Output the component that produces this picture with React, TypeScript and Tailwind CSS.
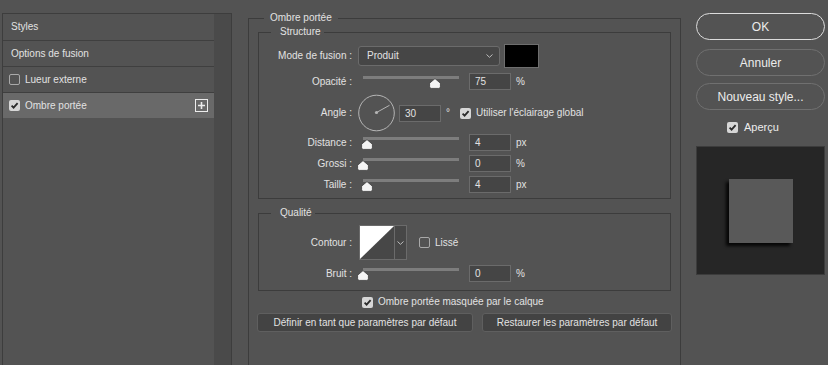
import React from "react";

function Check({ checked, className = "" }: { checked?: boolean; className?: string }) {
  return checked ? (
    <span className={`w-[11px] h-[11px] rounded-[2px] bg-[#d6d6d6] flex items-center justify-center shrink-0 ${className}`}>
      <svg width="9" height="9" viewBox="0 0 9 9">
        <path d="M1.6 4.6 L3.6 6.6 L7.6 2.2" stroke="#2a2a2a" strokeWidth="1.8" fill="none" />
      </svg>
    </span>
  ) : (
    <span className={`w-[11px] h-[11px] rounded-[2px] border border-[#a9a9a9] shrink-0 ${className}`} />
  );
}

function Thumb({ left }: { left: number }) {
  return (
    <svg
      width="12"
      height="11"
      viewBox="0 0 12 11"
      className="absolute top-[5px]"
      style={{ left: left - 6 }}
    >
      <path
        d="M6 0.6 L11.4 5.2 L11.4 8.8 Q11.4 10.4 9.8 10.4 L2.2 10.4 Q0.6 10.4 0.6 8.8 L0.6 5.2 Z"
        fill="#f4f4f4"
        stroke="#3a3a3a"
        strokeWidth="0.8"
      />
    </svg>
  );
}

function SliderRow({
  label,
  value,
  pos,
  unit,
  className = "",
}: {
  label: string;
  value: string;
  pos: number;
  unit: string;
  className?: string;
}) {
  return (
    <div className={`flex items-start h-[17px] ${className}`}>
      <div className="w-[93px] shrink-0 text-right leading-[17px]">{label}</div>
      <div className="relative ml-[11px] w-[96px] h-[17px] shrink-0">
        <div className="mt-[3px] h-[3px] bg-[#7d7d7d]" />
        <Thumb left={pos} />
      </div>
      <div className="ml-[10px] w-[42px] h-[17px] bg-[#454545] border border-[#6b6b6b] pl-[5px] leading-[15px] shrink-0">
        {value}
      </div>
      <div className="ml-[5px] leading-[17px]">{unit}</div>
    </div>
  );
}

export default function App() {
  return (
    <div className="w-[828px] h-[365px] bg-[#535353] overflow-hidden flex items-start text-[#e2e2e2] text-[10px] leading-[12px] font-['Liberation_Sans',Arial,sans-serif]">
      {/* Left panel */}
      <div className="ml-[2px] mt-[13px] w-[230px] h-[400px] border border-[#3d3d3d] border-b-0 flex shrink-0">
        <div className="w-[211px] flex flex-col">
          <div className="h-[27px] border-b border-[#3f3f3f] flex items-center pl-[8px]">Styles</div>
          <div className="h-[26px] border-b border-[#3f3f3f] flex items-center pl-[8px]">Options de fusion</div>
          <div className="h-[26px] border-b border-[#3f3f3f] flex items-center pl-[6px] gap-[5px]">
            <Check />
            <span>Lueur externe</span>
          </div>
          <div className="h-[25px] bg-[#696969] flex items-center pl-[6px] pr-[6px] gap-[5px]">
            <Check checked />
            <span className="flex-1">Ombre portée</span>
            <svg width="13" height="13" viewBox="0 0 13 13">
              <rect x="0.5" y="0.5" width="12" height="12" fill="none" stroke="#ececec" strokeWidth="1" />
              <path d="M6.5 3 V10 M3 6.5 H10" stroke="#ececec" strokeWidth="1.6" />
            </svg>
          </div>
        </div>
        <div className="flex-1 bg-[#4a4a4a]" />
      </div>

      {/* Middle */}
      <fieldset className="ml-[16px] mt-[12px] w-[433px] h-[400px] border border-[#3c3c3c] border-b-0 shrink-0">
        <legend className="ml-[15px] px-[6px] leading-[12px]">Ombre portée</legend>
        <div className="flex flex-col">
          <fieldset className="ml-[9px] mt-[2px] w-[413px] border border-[#3c3c3c] pb-[5px]">
            <legend className="ml-[12px] pl-[9px] pr-[3px] leading-[12px]">Structure</legend>
            <div className="flex flex-col">
              {/* Mode */}
              <div className="mt-[6px] h-[24px] flex items-center">
                <div className="w-[93px] shrink-0 text-right">Mode de fusion :</div>
                <div className="ml-[6px] w-[142px] h-[20px] bg-[#464646] border border-[#6b6b6b] rounded-[3px] flex items-center justify-between pl-[8px] pr-[6px] shrink-0">
                  <span>Produit</span>
                  <svg width="7" height="4" viewBox="0 0 7 4">
                    <path d="M0.5 0.5 L3.5 3.3 L6.5 0.5" stroke="#bdbdbd" strokeWidth="1" fill="none" />
                  </svg>
                </div>
                <div className="ml-[4px] w-[35px] h-[24px] bg-black border border-[#6e6e6e] shrink-0" />
              </div>
              {/* Opacity */}
              <SliderRow className="mt-[5px]" label="Opacité :" value="75" pos={72} unit="%" />
              {/* Angle */}
              <div className="mt-[4px] h-[38px] flex items-center">
                <div className="w-[93px] shrink-0 text-right">Angle :</div>
                <svg width="38" height="38" viewBox="0 0 38 38" className="ml-[6px] shrink-0">
                  <circle cx="18.5" cy="19" r="17.8" fill="none" stroke="#b5b5b5" strokeWidth="1" />
                  <path d="M18.5 18.5 L31.5 11.3" stroke="#b5b5b5" strokeWidth="1" />
                  <circle cx="18.5" cy="18.5" r="1.6" fill="#b5b5b5" />
                </svg>
                <div className="ml-[3px] w-[42px] h-[17px] bg-[#454545] border border-[#6b6b6b] pl-[5px] leading-[15px] shrink-0">
                  30
                </div>
                <span className="ml-[5px]">°</span>
                <Check checked className="ml-[10px]" />
                <span className="ml-[5px]">Utiliser l'éclairage global</span>
              </div>
              <SliderRow className="mt-[2px]" label="Distance :" value="4" pos={4} unit="px" />
              <SliderRow className="mt-[4px]" label="Grossi :" value="0" pos={0} unit="%" />
              <SliderRow className="mt-[4px]" label="Taille :" value="4" pos={4} unit="px" />
            </div>
          </fieldset>

          <fieldset className="ml-[9px] mt-[8px] w-[413px] border border-[#3c3c3c] pb-[8px]">
            <legend className="ml-[12px] pl-[9px] pr-[3px] leading-[12px]">Qualité</legend>
            <div className="flex flex-col">
              <div className="mt-[6px] h-[35px] flex items-center">
                <div className="w-[93px] shrink-0 text-right">Contour :</div>
                <div className="ml-[7px] h-[35px] flex border border-[#6b6b6b] shrink-0">
                  <svg width="34" height="33" viewBox="0 0 34 33" className="block">
                    <rect width="34" height="33" fill="#474747" />
                    <path d="M0 0 H34 L0 33 Z" fill="#ffffff" />
                  </svg>
                  <div className="w-[12px] bg-[#474747] border-l border-[#6b6b6b] flex items-center justify-center">
                    <svg width="7" height="4" viewBox="0 0 7 4">
                      <path d="M0.5 0.5 L3.5 3.3 L6.5 0.5" stroke="#bdbdbd" strokeWidth="1" fill="none" />
                    </svg>
                  </div>
                </div>
                <Check className="ml-[12px]" />
                <span className="ml-[5px]">Lissé</span>
              </div>
              <SliderRow className="mt-[5px]" label="Bruit :" value="0" pos={0} unit="%" />
            </div>
          </fieldset>

          <div className="mt-[5px] h-[12px] flex items-center pl-[113px]">
            <Check checked />
            <span className="ml-[5px]">Ombre portée masquée par le calque</span>
          </div>

          <div className="mt-[5px] ml-[8px] flex gap-[9px]">
            <div className="w-[216px] h-[19px] bg-[#434343] border border-[#5f5f5f] rounded-[3px] flex items-center justify-center">
              Définir en tant que paramètres par défaut
            </div>
            <div className="w-[190px] h-[19px] bg-[#434343] border border-[#5f5f5f] rounded-[3px] flex items-center justify-center">
              Restaurer les paramètres par défaut
            </div>
          </div>
        </div>
      </fieldset>

      {/* Right column */}
      <div className="ml-[15px] mt-[13px] w-[129px] flex flex-col shrink-0 text-[#ececec]">
        <div className="h-[27px] rounded-full border-[1.5px] border-[#dcdcdc] flex items-center justify-center text-[12px]">
          OK
        </div>
        <div className="mt-[9px] h-[27px] rounded-full border border-[#707070] flex items-center justify-center text-[12px]">
          Annuler
        </div>
        <div className="mt-[7px] h-[27px] rounded-full border border-[#707070] flex items-center justify-center text-[12px]">
          Nouveau style...
        </div>
        <div className="mt-[11px] h-[12px] flex items-center pl-[31px]">
          <Check checked />
          <span className="ml-[6px] text-[11px]">Aperçu</span>
        </div>
        <div className="mt-[13px] w-[129px] h-[129px] bg-[#262626] border border-[#3c3c3c] flex items-center justify-center">
          <div className="w-[64px] h-[64px] bg-[#595959] shadow-[-3px_3px_3px_rgba(0,0,0,0.85)]" />
        </div>
      </div>
    </div>
  );
}
